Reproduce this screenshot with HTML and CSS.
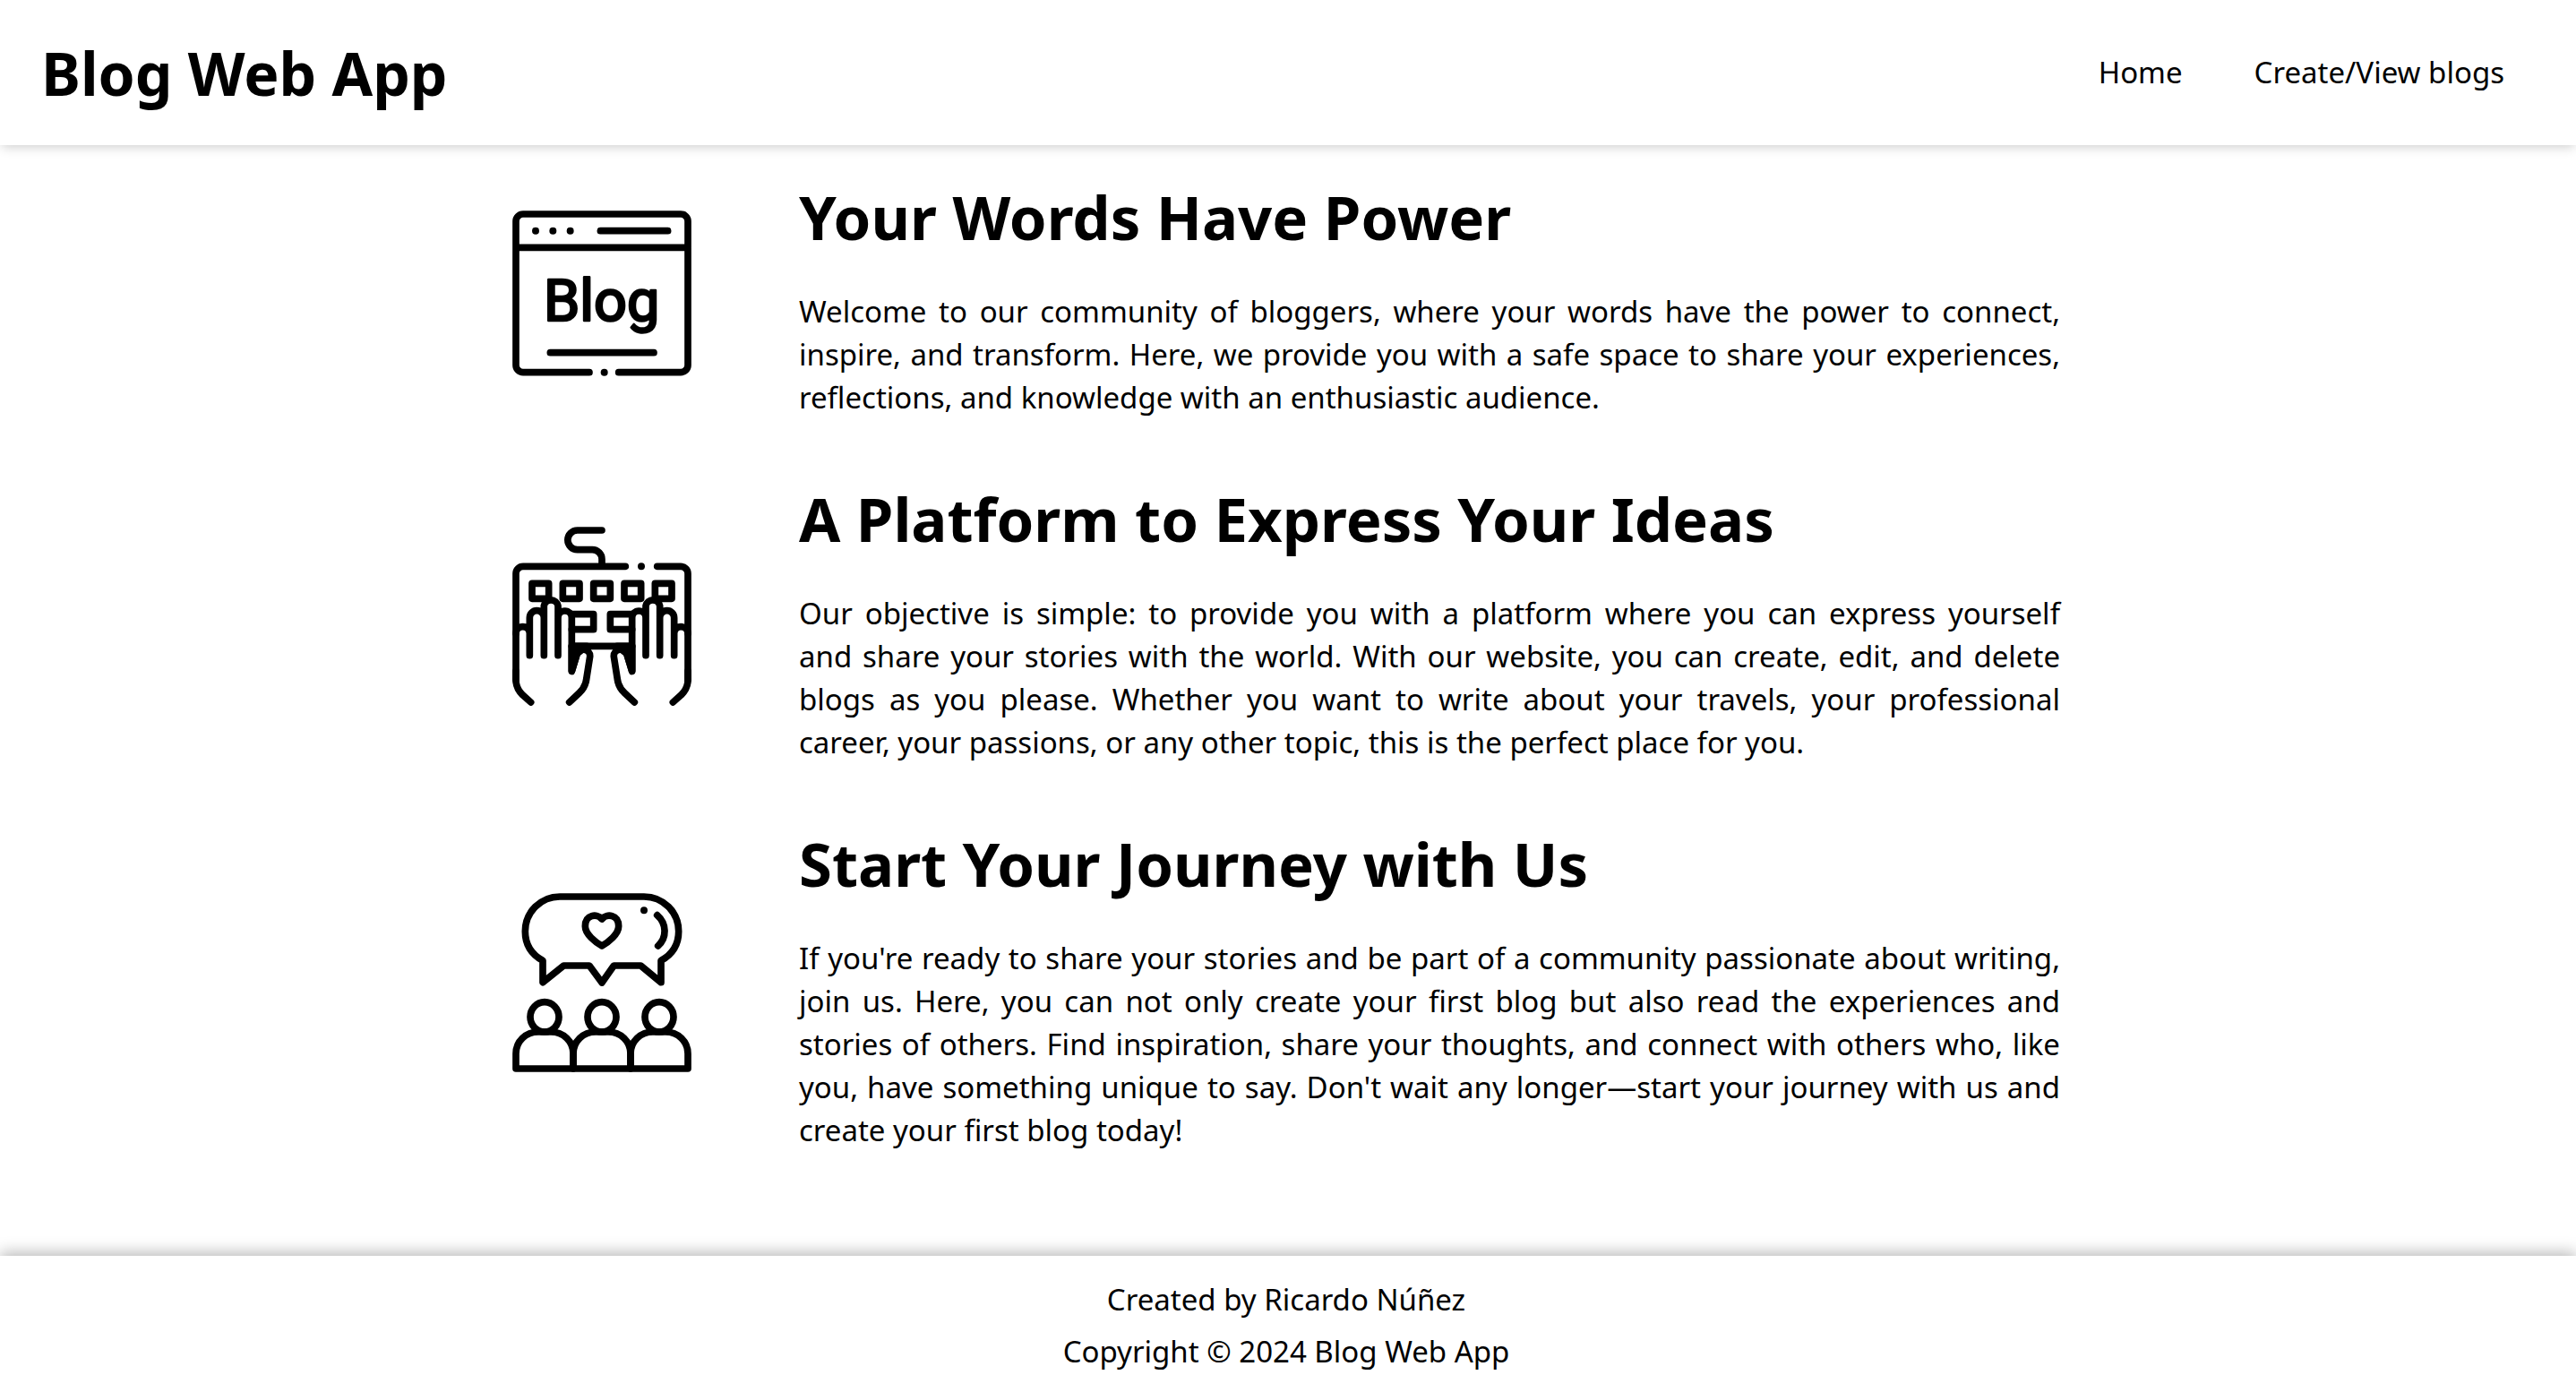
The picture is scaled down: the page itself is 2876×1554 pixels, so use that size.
FILE: index.html
```html
<!DOCTYPE html>
<html lang="en">
<head>
  <meta charset="utf-8">
  <meta name="viewport" content="width=device-width, initial-scale=1">
  <title>Blog Web App</title>
  <link rel="stylesheet" href="styles.css">
</head>
<body>
  <header class="site-header">
    <h1 class="site-title">Blog Web App</h1>
    <nav>
      <ul class="nav-list">
        <li><a class="nav-link" href="#home">Home</a></li>
        <li><a class="nav-link" href="#blogs">Create/View blogs</a></li>
      </ul>
    </nav>
  </header>

  <main class="features">
    <section class="feature">
      <svg class="feature-icon" viewBox="96 51 600 600" aria-hidden="true">
        <path d="M354 617H132a24 24 0 0 1-24-24V111a24 24 0 0 1 24-24H660a24 24 0 0 1 24 24V593a24 24 0 0 1-24 24H452M108 199H684M391 143H617M223 551H570"/>
        <g class="dots">
          <circle cx="174" cy="143" r="12"/>
          <circle cx="232" cy="143" r="12"/>
          <circle cx="290" cy="143" r="12"/>
          <circle cx="404" cy="617" r="12"/>
        </g>
        <text class="icon-text" x="201" y="445">Blog</text>
      </svg>
      <div class="feature-body">
        <h2 class="feature-title">Your Words Have Power</h2>
        <p class="feature-text">Welcome to our community of bloggers, where your words have the power to connect, inspire, and transform. Here, we provide you with a safe space to share your experiences, reflections, and knowledge with an enthusiastic audience.</p>
      </div>
    </section>

    <section class="feature">
      <svg class="feature-icon" viewBox="96 57 600 600" aria-hidden="true">
        <defs>
          <g id="hand">
            <path class="cover" d="M202 488V322a24 24 0 0 1 47 0V488Z"/>
            <path d="M108 415a23 23 0 0 1 46 0M154 488V362a24 24 0 0 1 48 0M202 488V322a24 24 0 0 1 47 0V488M249 362a23 23 0 0 1 46 0V541L313 482C320 460 358 465 356 492L344 568C341 590 332 603 320 614L287 645"/>
            <path class="solid" d="M295 457H345L313 482L295 541Z"/>
            <path d="M295 350H368V401H295M108 540V570C108 590 118 608 130 620L158 645"/>
          </g>
        </defs>
        <path d="M396 69H314a32 32 0 0 0 0 65h50a32 32 0 0 1 32 32v24M475 190H132a24 24 0 0 0-24 24V570M581 190H660a24 24 0 0 1 24 24V570M295 457H497"/>
        <path d="M162 247h56v51h-56zM265 247h56v51h-56zM368 247h56v51h-56zM471 247h56v51h-56zM574 247h56v51h-56z"/>
        <use href="#hand"/>
        <use href="#hand" transform="translate(792 0) scale(-1 1)"/>
        <circle class="dots" cx="528" cy="190" r="12"/>
      </svg>
      <div class="feature-body">
        <h2 class="feature-title">A Platform to Express Your Ideas</h2>
        <p class="feature-text">Our objective is simple: to provide you with a platform where you can express yourself and&nbsp;share your stories with the world. With our website, you can create, edit, and delete blogs as you please. Whether you want to write about your travels, your professional career,&nbsp;your passions, or any other topic, this is the perfect place for you.</p>
      </div>
    </section>

    <section class="feature">
      <svg class="feature-icon" viewBox="96 57 600 600" aria-hidden="true">
        <defs>
          <g id="person">
            <ellipse cx="204" cy="472" rx="48" ry="50"/>
            <path d="M108 645V595C108 553 141 522 183 522H225C267 522 300 553 300 595V645Z"/>
          </g>
        </defs>
        <path d="M198 283C160 262 139 227 139 185A116 116 0 0 1 255 69H537A116 116 0 0 1 653 185C653 227 632 262 594 283V356L526 300H436L396 357L354 300H268L198 356Z"/>
        <path d="M396 144C380 124 340 129 340 168C340 195 375 222 396 234C417 222 452 195 452 168C452 129 412 124 396 144Z"/>
        <path d="M581 131C614 160 614 206 584 234"/>
        <circle class="dots" cx="537" cy="115" r="12"/>
        <use href="#person"/>
        <use href="#person" x="192"/>
        <use href="#person" x="384"/>
      </svg>
      <div class="feature-body">
        <h2 class="feature-title">Start Your Journey with Us</h2>
        <p class="feature-text">If you're ready to share your stories and be part of a community passionate about writing, join us. Here, you can not only create your first blog but also read the experiences and stories of others. Find inspiration, share your thoughts, and connect with others who, like you, have something unique to say. Don't wait any longer—start your journey with us and create your first blog today!</p>
      </div>
    </section>
  </main>

  <footer class="site-footer">
    <p>Created by Ricardo Núñez</p>
    <p>Copyright © 2024 Blog Web App</p>
  </footer>
</body>
</html>
```
FILE: styles.css
```css
* {
  box-sizing: border-box;
  margin: 0;
  padding: 0;
}

body {
  display: flex;
  flex-direction: column;
  min-height: 100vh;
  background: #fff;
  color: #000;
  font-family: "Noto Sans", "Open Sans", sans-serif;
  font-size: 33px;
  line-height: 48px;
}

.site-header {
  display: flex;
  align-items: center;
  justify-content: space-between;
  padding: 25px 40px 25px 46px;
  box-shadow: 0 4px 12px -2px rgba(0, 0, 0, 0.2);
}

.site-title {
  font-size: 66px;
  line-height: 112px;
}

.nav-list {
  display: flex;
  list-style: none;
}

.nav-link {
  display: block;
  padding: 0 40px;
  color: inherit;
  text-decoration: none;
}

.features {
  display: flex;
  flex: 1;
  flex-direction: column;
  gap: 55px;
  width: 100%;
  max-width: 1732px;
  margin: 0 auto;
  padding: 24px 4px 60px 0;
}

.feature {
  display: flex;
  align-items: center;
  gap: 120px;
}

.feature-icon {
  flex: none;
  width: 200px;
  height: 200px;
  fill: none;
  stroke: #000;
  stroke-width: 23px;
  stroke-linecap: round;
  stroke-linejoin: round;
}

.dots,
.solid {
  fill: #000;
}

.dots,
.cover {
  stroke: none;
}

.cover {
  fill: #fff;
}

.icon-text {
  fill: #000;
  stroke-width: 8px;
  font-family: Roboto, sans-serif;
  font-size: 194px;
}

.feature-body {
  flex: 1;
}

.feature-title {
  margin-bottom: 26px;
  font-size: 67px;
  line-height: 112px;
}

.feature-text {
  text-align: justify;
}

.site-footer {
  padding: 20px 4px 16px 0;
  box-shadow: 0 -4px 16px rgba(0, 0, 0, 0.27);
  line-height: 58px;
  text-align: center;
}
```
